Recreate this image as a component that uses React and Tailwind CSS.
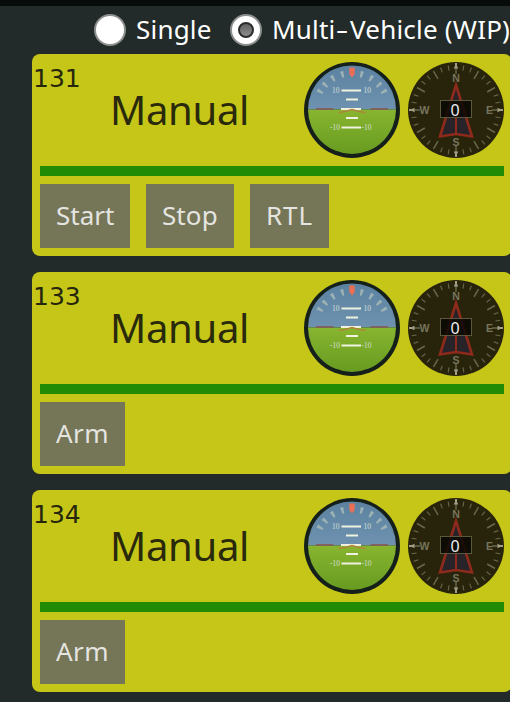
import React from "react";

const vehicles = [
  { id: "131", actions: ["Start", "Stop", "RTL"] },
  { id: "133", actions: ["Arm"] },
  { id: "134", actions: ["Arm"] },
];

const actionStyles = {
  Start: "w-[90px] tracking-[0px]",
  Stop: "w-[88px] tracking-[0.1px]",
  RTL: "w-[79px] tracking-[0.9px]",
  Arm: "w-[85px] tracking-[0.5px]",
};

function Attitude() {
  return (
    <svg className="block size-24 shrink-0" viewBox="0 0 96 96">
      <defs>
        <linearGradient id="sky" x1="0" y1="0" x2="0" y2="1">
          <stop offset="0" stopColor="#5b82a0" />
          <stop offset="1" stopColor="#6e92b0" />
        </linearGradient>
        <linearGradient id="ground" x1="0" y1="0" x2="0" y2="1">
          <stop offset="0" stopColor="#88b530" />
          <stop offset="1" stopColor="#679b20" />
        </linearGradient>
      </defs>
      <circle cx="48" cy="48" r="48" fill="#15201a" />
      <path d="M4 47.5a44 44 0 0 1 88 0z" fill="url(#sky)" />
      <path d="M4 47.5a44 44.5 0 0 0 88 0z" fill="url(#ground)" />
      <g fill="#9db2b4">
        {[-60, -47, -31, -15, 15, 31, 47, 60].map((a) => (
          <path key={a} d="M46.3 8h3.4l-.8 6.5h-1.8z" transform={`rotate(${a} 48 48)`} />
        ))}
      </g>
      <path d="M45.3 5.5h5.4v6.5L48 15.5 45.3 12z" fill="#ea6e55" />
      <g stroke="#f0f2df" strokeWidth="2">
        <path d="M37.5 28.5h19.5M42 37.5h12M37 47h20M42 56h12M37.5 65.5h19.5" />
      </g>
      <g fill="#d5dfd5" fontSize="7.5" fontFamily="Liberation Serif, serif">
        <text x="28" y="31">10</text>
        <text x="59.5" y="31">10</text>
        <text x="26" y="68">-10</text>
        <text x="57.5" y="68">-10</text>
      </g>
      <path d="M12 47h17.5M66.5 47h17.5" stroke="#80625c" strokeWidth="2" />
      <path d="M34.5 50.5q7-.5 13.5-3 6.500 2.500 13.500 3" fill="none" stroke="#b0863b" strokeWidth="1.5" />
    </svg>
  );
}

function Compass() {
  const ticks = Array.from({ length: 36 }, (_, i) => i * 10);
  return (
    <div className="relative size-24 shrink-0">
      <svg className="block size-24" viewBox="0 0 96 96">
        <circle cx="48" cy="48" r="48" fill="#28240b" />
        <g stroke="#68674b">
          {ticks.map((a) => (
            <path
              key={a}
              d={a % 30 === 0 ? "M48 3v9" : "M48 3v5"}
              strokeWidth={a % 30 === 0 ? 1.5 : 1.1}
              transform={`rotate(${a} 48 48)`}
            />
          ))}
        </g>
        <g fill="#a19e86">
          {[0, 90, 180, 270].map((a) => (
            <path key={a} d="M47 1h2v3l1.300 2.500h-4.600L47 4z" transform={`rotate(${a} 48 48)`} />
          ))}
        </g>
        <g fill="#77755d" fontSize="10.500" fontWeight="700" fontFamily="Liberation Sans, Arial, sans-serif" textAnchor="middle">
          <text x="48" y="19.500">N</text>
          <text x="48" y="83.500">S</text>
          <text x="16.500" y="51.700">W</text>
          <text x="81.500" y="51.700">E</text>
        </g>
        <path d="M48 23l16 51.500-16-2.500-16 2.500z" fill="#272329" stroke="#8d2a1c" strokeWidth="2.600" />
        <path d="M48 54v18" stroke="#8d2a1c" strokeWidth="2" />
        <rect x="32.500" y="38.500" width="31" height="17" fill="#080804" fillOpacity=".84" stroke="#5b583c" />
      </svg>
      <div className="absolute left-8 top-[38px] flex h-[19px] w-[30px] items-center justify-center font-['Noto_Sans',sans-serif] text-[16px] leading-none text-[#eeeeee]">
        0
      </div>
    </div>
  );
}

function VehicleCard({ id, actions }) {
  return (
    <section className="relative h-[202px] w-[480px] shrink-0 rounded-lg bg-[#c6c618] p-2">
      <div className="absolute left-[1px] top-[9px] font-['DejaVu_Sans',sans-serif] text-[25px] leading-8 text-[#26260d]">{id}</div>
      <div className="flex h-24 items-center gap-2">
        <div className="flex-1 pl-[70px] font-['Noto_Sans',sans-serif] text-[40px] leading-[56px] tracking-[-0.3px] text-[#29290c]">Manual</div>
        <Attitude />
        <Compass />
      </div>
      <div className="mt-2 h-2.5 bg-[#228b05]" />
      <div className="mt-2 flex gap-4">
        {actions.map((action) => (
          <button
            key={action}
            className={`h-16 shrink-0 whitespace-nowrap bg-[#757557] px-4 pb-0.5 text-left font-['Noto_Sans',sans-serif] text-[26px] leading-8 text-[#e4e4e0] ${actionStyles[action]}`}
          >
            {action}
          </button>
        ))}
      </div>
    </section>
  );
}

function Radio({ checked }) {
  return (
    <span className="flex size-8 shrink-0 items-center justify-center rounded-full border-2 border-[#8c8f8e] bg-white">
      {checked && <span className="size-4 rounded-full border-2 border-[#292c2b] bg-linear-to-b from-[#626262] to-[#8c8c8c]" />}
    </span>
  );
}

export default function App() {
  return (
    <main className="h-[702px] w-[510px] overflow-hidden border-t-[6px] border-[#070b0a] bg-[#222b29]">
      <div className="flex h-12 items-center whitespace-nowrap pl-[94px] font-['Noto_Sans',sans-serif] text-[26px] leading-8 text-white">
        <Radio />
        <span className="ml-2.5 w-[94px] shrink-0 pb-0.5 tracking-[0.2px]">Single</span>
        <Radio checked />
        <span className="ml-2.5 shrink-0 pb-0.5 tracking-[0.2px]">Multi<span className="mx-[3px] inline-block scale-x-150">-</span>Vehicle (WIP)</span>
      </div>
      <div className="flex flex-col gap-4 pl-8">
        {vehicles.map((v) => (
          <VehicleCard key={v.id} {...v} />
        ))}
      </div>
    </main>
  );
}
